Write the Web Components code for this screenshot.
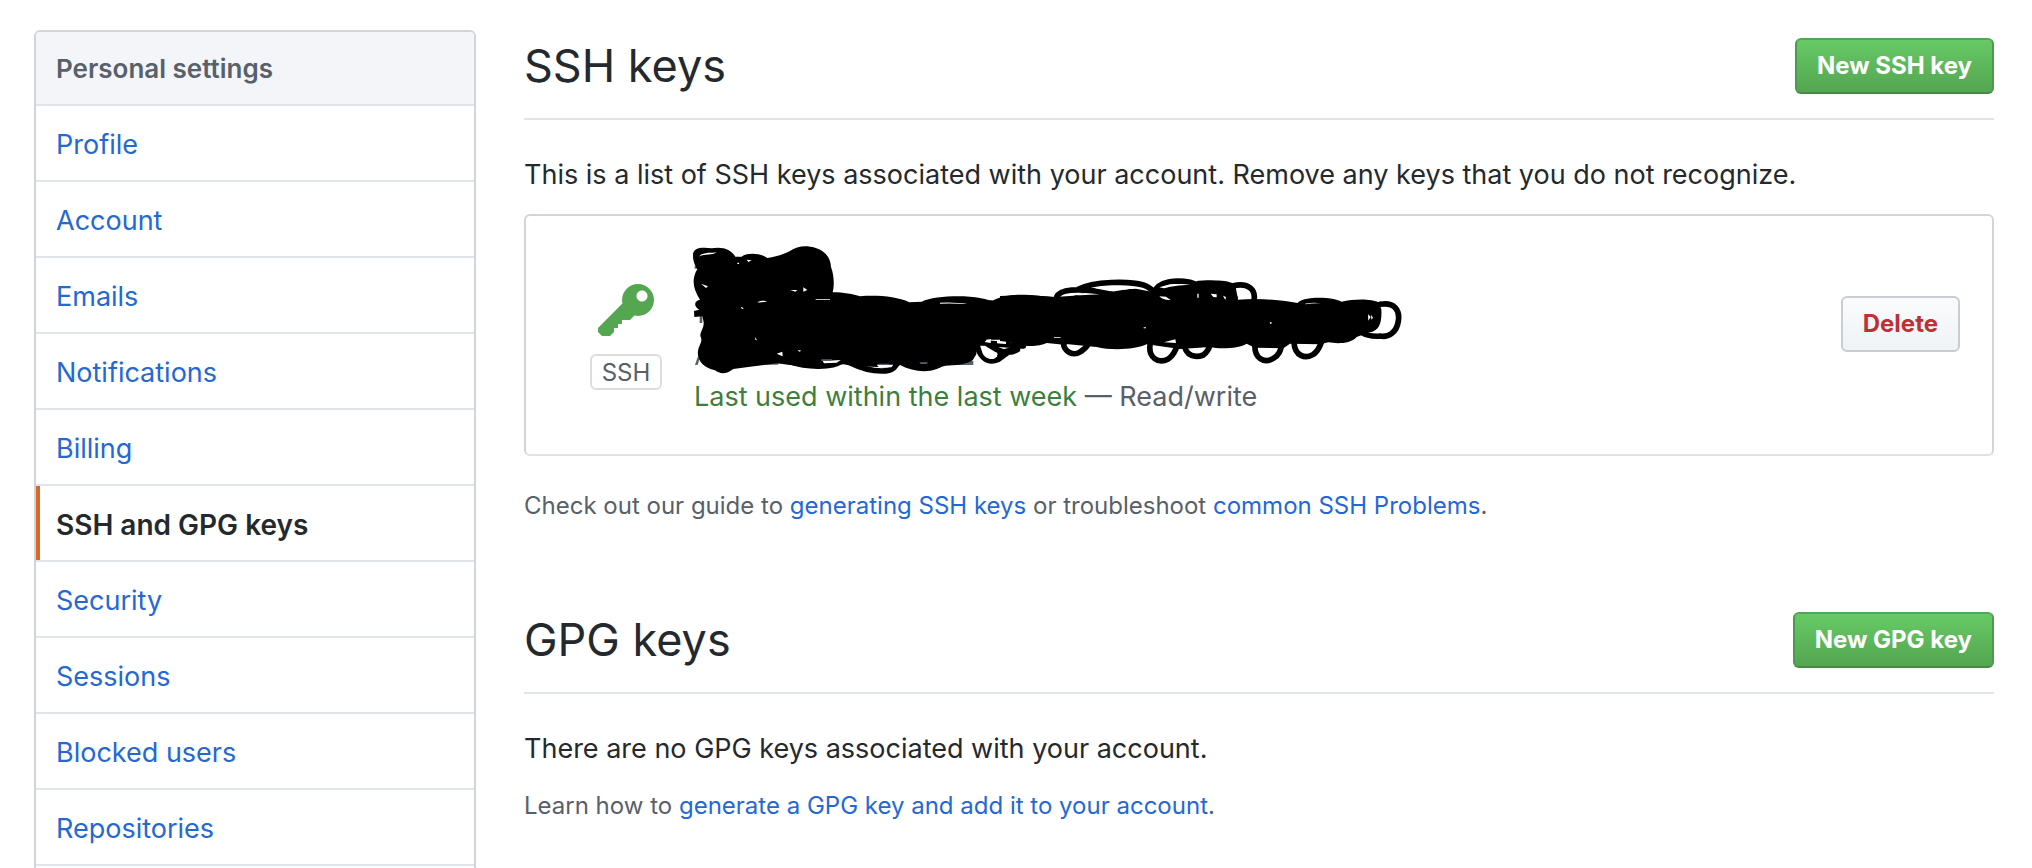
<!DOCTYPE html>
<html lang="en">
<head>
<meta charset="utf-8">
<meta name="viewport" content="width=device-width, initial-scale=1">
<title>SSH and GPG keys</title>
<style>
  body { margin: 0; background: #fff; color: #24292e; font: 27px/42px Inter, "Liberation Sans", sans-serif; }
</style>
</head>
<body>
<settings-page>
  <settings-menu slot="menu" heading="Personal settings">
    <menu-item>Profile</menu-item>
    <menu-item>Account</menu-item>
    <menu-item>Emails</menu-item>
    <menu-item>Notifications</menu-item>
    <menu-item>Billing</menu-item>
    <menu-item current>SSH and GPG keys</menu-item>
    <menu-item>Security</menu-item>
    <menu-item>Sessions</menu-item>
    <menu-item>Blocked users</menu-item>
    <menu-item>Repositories</menu-item>
  </settings-menu>
  <key-section heading="SSH keys" action="New SSH key">
    This is a list of SSH keys associated with your account. Remove any keys that you do not recognize.
    <key-card slot="keys" type="SSH">
      <span slot="used">Last used within the last week</span>
      <span slot="access">— Read/write</span>
    </key-card>
    <help-note slot="note">Check out our guide to <help-link>generating SSH keys</help-link> or troubleshoot <help-link>common SSH Problems</help-link>.</help-note>
  </key-section>
  <key-section heading="GPG keys" action="New GPG key">
    There are no GPG keys associated with your account.
    <help-note slot="note">Learn how to <help-link>generate a GPG key and add it to your account</help-link>.</help-note>
  </key-section>
</settings-page>

<script>
const define = (name, html, setup) => customElements.define(name, class extends HTMLElement {
  constructor() {
    super();
    this.attachShadow({ mode: "open" }).innerHTML = html;
  }
  connectedCallback() {
    if (setup) setup(this, this.shadowRoot);
  }
});

define("settings-page", `
  <style>
    :host { display: grid; grid-template-columns: 442px minmax(0, 1fr); column-gap: 48px; align-items: start; padding: 30px 38px 0 34px; height: 100vh; box-sizing: border-box; overflow: hidden; }
    main { display: flex; flex-direction: column; gap: 80px; }
  </style>
  <slot name="menu"></slot>
  <main><slot></slot></main>`);

define("settings-menu", `
  <style>
    :host { display: block; border: 2px solid #d1d5da; border-radius: 6px; overflow: hidden; }
    h2 { margin: 0; padding: 16px 20px 14px; font-size: 26px; line-height: 42px; font-weight: 600; color: #586069; background: #f3f5f9; }
    nav::after { content: ""; display: block; height: 74px; border-top: 2px solid #e1e4e8; }
  </style>
  <nav aria-labelledby="title"><h2 id="title"></h2><slot></slot></nav>`,
  (host, root) => { root.querySelector("h2").textContent = host.getAttribute("heading"); });

define("menu-item", `
  <style>
    :host { display: block; border-top: 2px solid #e1e4e8; }
    a { display: block; padding: 18px 20px 14px; color: #2468d2; text-decoration: none; }
    :host([current]) a { color: #24292e; font-size: 28px; font-weight: 600; border-left: 4px solid #d9692b; padding-left: 16px; }
  </style>
  <a href="#"><slot></slot></a>`,
  (host, root) => { if (host.hasAttribute("current")) root.querySelector("a").setAttribute("aria-current", "page"); });

define("push-button", `
  <style>
    :host { display: block; flex: none; }
    button { display: block; height: 56px; padding: 0 20px; font: 700 24px/40px Inter, "Liberation Sans", sans-serif; border-radius: 6px; border: 2px solid #c9cdd1; background: linear-gradient(#fafbfc, #eff3f6); color: #bb3135; }
    :host([primary]) button { color: #fff; border-color: #54a655 #4b9a4d #458a46; background: linear-gradient(#68cb67, #53a450) border-box; }
  </style>
  <button type="button"><slot></slot></button>`);

define("key-section", `
  <style>
    :host { display: block; }
    header { display: flex; justify-content: space-between; align-items: center; padding-bottom: 16px; border-bottom: 2px solid #e1e4e8; }
    h2 { margin: 0; font-size: 45px; line-height: 72px; font-weight: 400; }
    p { margin: 34px 0 18px; }
  </style>
  <section>
    <header><h2></h2><push-button primary></push-button></header>
    <p><slot></slot></p>
    <slot name="keys"></slot>
    <slot name="note"></slot>
  </section>`,
  (host, root) => {
    root.querySelector("h2").textContent = host.getAttribute("heading");
    root.querySelector("push-button").textContent = host.getAttribute("action");
  });

define("help-note", `
  <style>
    :host { display: block; font-size: 24px; line-height: 36px; color: #586069; }
  </style>
  <slot></slot>`);

define("help-link", `
  <style>
    :host { display: inline; }
    a { color: #2468d2; text-decoration: none; }
  </style>
  <a href="#"><slot></slot></a>`);

define("key-icon", `
  <style>
    :host { display: block; width: 56px; height: 64px; }
    svg { display: block; fill: #54a651; }
  </style>
  <svg viewBox="0 0 14 16" width="56" height="64" aria-hidden="true"><path fill-rule="evenodd" d="M12.83 2.17C12.08 1.42 11.14 1.03 10 1c-1.13.03-2.08.42-2.83 1.17S6.04 3.86 6.01 5c0 .3.03.59.09.89L0 12v1l1 1h2l1-1v-1h1v-1h1v-1h2l1.09-1.11c.3.08.59.11.91.11 1.14-.03 2.08-.42 2.83-1.17S13.97 6.14 14 5c-.03-1.14-.42-2.08-1.17-2.83zM11 5.38c-.77 0-1.38-.61-1.38-1.38 0-.77.61-1.38 1.38-1.38.77 0 1.38.61 1.38 1.38 0 .77-.61 1.38-1.38 1.38z"/></svg>`);

define("ink-scribble", `
  <style>
    :host { display: block; }
    svg { display: block; overflow: visible; }
    .line { fill: none; stroke: #000; stroke-width: 17; stroke-linecap: round; stroke-linejoin: round; }
    .gap { fill: #fff; }
    .under { fill: #586069; }
  </style>
  <svg viewBox="402 75 2160 390" width="720" height="130" aria-hidden="true">
    <path class="under" d="M404 134h12v9h-12zM419 284h8v22h-8zM405 432l8-24 6 4-6 20zM615 424h40v7h-40zM1185 420h55v12h-55z"/>
    <path d="M399 102C399 80 425 78 455 82C490 75 515 88 526 107L545 107C560 94 600 95 622 111C650 107 670 100 690 90C710 74 740 72 765 80C800 90 812 115 813 138C823 165 823 195 818 214C850 214 880 219 900 226C950 222 1010 226 1048 244L1085 242C1120 225 1210 222 1260 231C1280 235 1290 239 1300 238C1330 223 1360 219 1410 222L1520 232V372L1460 366C1440 376 1400 378 1380 370L1320 356L1250 356L1249 400L1238 418C1200 440 1160 428 1140 440C1100 458 1060 452 1020 432L1010 440L880 435L850 430L780 442L690 432L650 427L570 437L520 444C500 460 480 460 465 448C430 440 410 418 414 390C417 370 430 362 421 345C421 330 432 322 431 304L427 286L403 288L402 270L418 266C400 256 402 240 420 236C396 200 396 170 412 145C400 125 399 112 399 102Z"/>
    <path class="line" d="M690 422C740 440 820 440 843 420M870 425C900 440 930 450 965 450C1000 450 1012 435 1008 418M1250 360C1254 405 1280 430 1315 415C1345 395 1360 380 1370 370M1265 355C1300 385 1340 405 1372 386M1260 365L1390 375"/>
    <path class="gap" d="M416 107C430 92 455 97 470 94C455 105 430 98 416 107ZM423 188L444 196L438 201ZM560 116L575 118L565 123ZM532 125H537V129H532ZM592 244C605 238 615 239 621 242C610 243 600 246 592 244ZM691 207L712 207L706 212ZM730 199L742 207L730 212ZM767 235H810V237H767ZM542 257L552 262L546 264ZM585 348L591 358L586 356ZM650 398L667 392L668 406ZM713 386L724 389L718 392ZM788 420L842 417L830 425L792 427ZM1140 245Q1190 243 1223 249Q1180 247 1140 248ZM950 431L1000 431L994 439L958 440ZM1265 384C1278 378 1290 382 1300 402C1315 408 1305 416 1290 414C1272 410 1265 396 1265 384ZM1280 356L1293 355L1292 366L1274 363ZM1311 358L1338 362V369L1311 367ZM1340 390L1360 382L1352 391Z"/>
    <path class="under" d="M784 415h34l-8 5h-26zM955 428h32v4h-32zM1078 424h26l-4 5h-18z"/>
    <g transform="translate(1320 60)">
      <path d="M80 162L165 168L220 164C260 150 300 155 330 153L400 142L455 152L482 132L592 124C630 116 690 116 706 132L714 176C780 170 850 178 893 186C905 168 990 164 1025 182C1060 174 1115 172 1137 185L1144 205C1146 240 1140 270 1108 274L1070 288C1050 310 1010 308 985 304L960 310L870 308L850 322L765 320L740 308C720 322 660 325 630 318L540 324L440 310C400 328 330 328 290 318L190 308L130 300C110 318 80 318 60 308L0 300V165Z"/>
      <path class="line" d="M170 168C180 145 225 140 330 155M235 145C280 120 390 120 430 132C455 140 465 155 480 170M462 155C475 120 530 116 570 124C590 130 610 140 620 150M595 128C640 122 690 130 705 170M700 134C745 125 768 145 762 178M190 305C192 335 222 345 240 333C255 325 260 318 266 308M450 312C445 350 475 370 505 354C525 340 530 320 534 305M552 305C555 350 590 350 610 342C625 330 628 320 630 310M765 310C762 350 790 370 820 352C840 340 842 325 845 312M882 305C885 345 915 355 940 340C955 330 960 315 964 304M1140 190C1185 182 1200 210 1195 240C1190 275 1165 290 1140 285C1115 288 1090 280 1080 270M0 336C30 330 50 325 60 310M0 345L15 335"/>
      <path class="gap" d="M205 162L255 156L300 160L240 163ZM283 142C320 136 375 138 415 143C380 144 350 147 332 151ZM478 139L510 130C540 127 560 130 570 131C540 132 510 136 492 142ZM478 166L498 167L512 177C498 178 484 174 478 166ZM632 158L650 160L650 169L640 168ZM669 164L678 168L676 177ZM592 158H596V170H592ZM809 242L817 246L811 249ZM431 259H438V262H431ZM1104 220L1112 228L1105 239ZM1113 221L1119 230L1114 236ZM492 304L526 295L528 306ZM162 289H182V291H162ZM915 188Q940 183 963 187Q940 186 915 190ZM0 302H16L15 307H0Z"/>
    </g>
  </svg>`);

define("key-card", `
  <style>
    :host { display: flex; align-items: flex-start; border: 2px solid #d1d5da; border-bottom-color: #dfe2e6; border-radius: 6px; padding: 30px 32px 36px 64px; margin-bottom: 32px; }
    .type { display: flex; flex-direction: column; align-items: center; gap: 10px; width: 72px; padding-top: 34px; margin-right: 32px; }
    .badge { box-sizing: border-box; width: 72px; height: 36px; border: 2px solid #ddd; border-radius: 6px; font-size: 24px; line-height: 34px; text-align: center; color: #586069; }
    .detail { flex: 1; min-width: 0; color: #586069; }
    ::slotted([slot=used]) { color: #3c7f3c; }
    push-button { padding-top: 50px; }
  </style>
  <div class="type"><key-icon></key-icon><span class="badge"></span></div>
  <div class="detail">
    <ink-scribble></ink-scribble>
    <div><slot name="used"></slot> <slot name="access"></slot></div>
  </div>
  <push-button>Delete</push-button>`,
  (host, root) => { root.querySelector(".badge").textContent = host.getAttribute("type"); });
</script>
</body>
</html>
